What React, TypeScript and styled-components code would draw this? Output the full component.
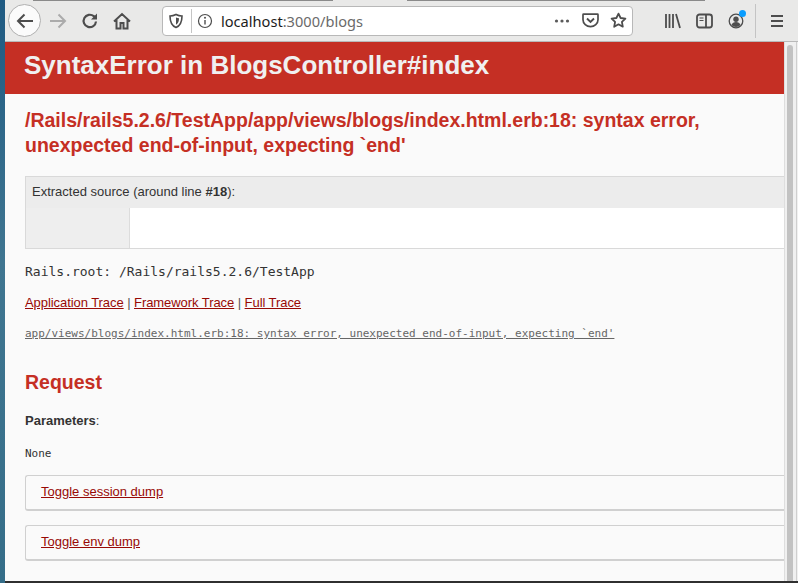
import React from "react";
import styled, { createGlobalStyle } from "styled-components";

const Global = createGlobalStyle`
  html, body { margin: 0; padding: 0; width: 798px; height: 583px; overflow: hidden; background: #2f2f2f; }
  #root { width: 798px; height: 583px; }
`;

const Screen = styled.div`
  display: flex; width: 798px; height: 583px; overflow: hidden;
  font-family: "Liberation Sans", Arial, sans-serif;
`;
const Desktop = styled.div`
  width: 5px; flex: none; background: linear-gradient(180deg, #1f5a82 0%, #3f7590 45%, #356d88 100%);
`;
const Window = styled.div`
  flex: 1; min-width: 0; display: flex; flex-direction: column; height: 581px; background: #fafafa;
`;
const Toolbar = styled.div`
  height: 42px; flex: none; box-sizing: border-box; display: flex; align-items: center;
  background-color: #e9e9e8;
  background-image: linear-gradient(to right, transparent 28px, #8a8a8a 28px, #8a8a8a 328px, transparent 328px, transparent 402px, #8a8a8a 402px, #8a8a8a 700px, transparent 700px);
  background-size: 100% 1px; background-repeat: no-repeat; background-position: top;
  border-bottom: 1px solid #b9b9b9;
`;
const BackButton = styled.div`
  width: 33px; height: 33px; margin-left: 3px; border-radius: 50%; border: 1px solid #b0b0b0;
  background: #fbfbfb; display: flex; align-items: center; justify-content: center; box-sizing: border-box; flex: none;
`;
const ToolIcon = styled.div<{ $w?: number; $ml?: number }>`
  width: ${(p) => p.$w ?? 20}px; height: 20px; margin-left: ${(p) => p.$ml ?? 0}px; flex: none;
  display: flex; align-items: center; justify-content: center; position: relative;
`;
const UrlBar = styled.div`
  width: 471px; height: 30px; margin-left: 30px; flex: none; box-sizing: border-box; padding-right: 5px;
  background: #fff; border: 1px solid #b8b8b8; border-radius: 4px; display: flex; align-items: center;
`;
const Divider = styled.div<{ $h: number; $ml: number }>`
  width: 1px; height: ${(p) => p.$h}px; background: #c4c4c4; margin-left: ${(p) => p.$ml}px; flex: none;
`;
const UrlText = styled.div`
  font-family: "Noto Sans", "Open Sans", sans-serif; font-size: 14.6px; color: #6a6a6a; margin-left: 8px; flex: 1; white-space: nowrap;
`;
const Host = styled.span`color: #1c1c1c;`;
const Dot = styled.span`
  position: absolute; right: -1px; top: -1px; width: 7px; height: 7px; border-radius: 50%; background: #0a9dff;
`;
const Viewport = styled.div`
  flex: 1; min-height: 0; display: flex;
`;
const Page = styled.div`
  flex: 1; min-width: 0; overflow: hidden; color: #333; font-size: 13px; line-height: 18px; background: #fafafa;
`;
const Header = styled.header`
  height: 52px; box-sizing: border-box; background: #c52f24; color: #f0f0f0; padding: 0 19px 6px; display: flex; align-items: center;
`;
const Title = styled.h1`
  margin: 0; font-size: 26px; line-height: 29px; font-weight: 700; white-space: nowrap;
`;
const Main = styled.main`
  padding: 14px 0 0 20px;
`;
const ErrorTitle = styled.h2`
  margin: 0; color: #c52f24; font-size: 19.5px; line-height: 25px; font-weight: 700; width: 720px;
`;
const Source = styled.div`
  margin-top: 18px; border: 1px solid #d9d9d9; border-right: none; background: #eee; height: 73px; box-sizing: border-box;
  display: flex; flex-direction: column;
`;
const SourceHead = styled.div`
  height: 31px; flex: none; padding: 6px 6px 0; box-sizing: border-box; background: #ececec; color: #333;
`;
const SourceBody = styled.div`
  flex: 1; display: flex;
`;
const Gutter = styled.div`
  width: 104px; flex: none; box-sizing: border-box; border-right: 1px solid #dcdcdc; background: #eee;
`;
const Code = styled.div`
  flex: 1; background: #fff;
`;
const RailsRoot = styled.div`
  font-family: "DejaVu Sans Mono", "Liberation Mono", monospace; font-size: 13px; line-height: 16px; margin-top: 15px; color: #333; white-space: pre;
`;
const TraceLinks = styled.div`
  margin-top: 14px; color: #555; font-size: 13px; line-height: 18px; letter-spacing: -0.065px;
`;
const Link = styled.a`
  color: #980905; text-decoration: underline;
`;
const FileLink = styled.div`
  font-family: "DejaVu Sans Mono", monospace; font-size: 11px; line-height: 14px; margin-top: 15px; color: #666; text-decoration: underline; white-space: nowrap;
`;
const SectionTitle = styled.h2`
  margin: 29px 0 0; color: #c52f24; font-size: 19.5px; line-height: 25px; font-weight: 700;
`;
const Params = styled.p`
  margin: 17px 0 0; line-height: 18px; color: #333;
`;
const NoneText = styled.pre`
  margin: 17px 0 0; font-family: "DejaVu Sans Mono", monospace; font-size: 11px; line-height: 14px; color: #333;
`;
const Dump = styled.div`
  margin-top: 14px; height: 36px; box-sizing: border-box; border: 1px solid #d0d0d0; border-bottom-width: 2px; border-right: none;
  border-radius: 3px 0 0 3px; padding: 7px 15px 0;
`;
const Scrollbar = styled.div`
  width: 14px; flex: none; background: #f0f0f0; border-left: 1px solid #dedede; box-sizing: border-box; padding: 3px 5px 0 2px; display: flex;
  box-shadow: inset -1px 0 0 #f0f0f0, inset -2px 0 0 #cfcfcf;
`;
const Thumb = styled.div`
  flex: 1; background: #c2c2c2; border-radius: 3px 3px 0 0;
`;

const s = { fill: "none", stroke: "#4d4d4d", strokeWidth: 2 } as const;

export default function App() {
  return (
    <Screen>
      <Global />
      <Desktop />
      <Window>
        <Toolbar>
          <BackButton>
            <svg width="18" height="18" viewBox="0 0 18 18"><path d="M17 9H2M8.500 2.500 2 9l6.500 6.500" {...s} /></svg>
          </BackButton>
          <ToolIcon $ml={7}>
            <svg width="18" height="18" viewBox="0 0 18 18"><path d="M1 9h14.500M9.500 2.500 16 9l-6.500 6.500" {...s} stroke="#ababab" /></svg>
          </ToolIcon>
          <ToolIcon $ml={12}>
            <svg width="18" height="18" viewBox="0 0 18 18"><path d="M15 9.500A6.200 6.200 0 1 1 12.800 4.200L15 6" {...s} strokeWidth={2.200} /><path d="M16 1.500v6h-6z" fill="#4d4d4d" /></svg>
          </ToolIcon>
          <ToolIcon $ml={12}>
            <svg width="18" height="18" viewBox="0 0 18 18"><path d="M1 9.500 9 2l8 7.500M3.500 8v8.500h4V11h3v5.500h4V8" {...s} /></svg>
          </ToolIcon>
          <UrlBar>
            <ToolIcon $w={20} $ml={3}>
              <svg width="16" height="16" viewBox="0 0 16 16"><path d="M2 3c2 0 4-.5 6-1.500C10 2.500 12 3 14 3c0 5-1 9.500-6 11.500C3 12.500 2 8 2 3Z" {...s} strokeWidth={1.600} /><path d="M8 4.500c1 .5 2 .8 3 .8 0 3-.6 5-3 6.500Z" fill="#4d4d4d" /></svg>
            </ToolIcon>
            <Divider $h={24} $ml={5} />
            <ToolIcon $w={16} $ml={5}>
              <svg width="16" height="16" viewBox="0 0 16 16"><circle cx="8" cy="8" r="6.500" fill="none" stroke="#4d4d4d" strokeWidth="1.200" /><path d="M8 7v4.500" stroke="#4d4d4d" strokeWidth="1.400" /><circle cx="8" cy="4.800" r="1" fill="#4d4d4d" /></svg>
            </ToolIcon>
            <UrlText><Host>localhost</Host>:3000/blogs</UrlText>
            <ToolIcon $w={18}>
              <svg width="16" height="6" viewBox="0 0 16 6" fill="#5a5a5a"><circle cx="2.500" cy="3" r="1.600" /><circle cx="8" cy="3" r="1.600" /><circle cx="13.500" cy="3" r="1.600" /></svg>
            </ToolIcon>
            <ToolIcon $w={18} $ml={10}>
              <svg width="17" height="17" viewBox="0 0 17 17"><path d="M1.500 2.200h14c.4 0 .5.200.5.500v5c0 4-3.500 7-7.500 7S1 11.700 1 7.700v-5c0-.3.200-.5.500-.5Z" {...s} strokeWidth={1.700} /><path d="m5 6.500 3.500 3.500L12 6.500" {...s} strokeWidth={1.900} /></svg>
            </ToolIcon>
            <ToolIcon $w={18} $ml={10}>
              <svg width="17" height="17" viewBox="0 0 17 17"><path d="m8.500 1.600 2.100 4.400 4.800.6-3.500 3.300.9 4.800-4.300-2.400-4.300 2.400.9-4.800L1.600 6.600l4.800-.6Z" {...s} strokeWidth={1.800} strokeLinejoin="round" /></svg>
            </ToolIcon>
          </UrlBar>
          <ToolIcon $w={18} $ml={30}>
            <svg width="17" height="16" viewBox="0 0 17 16"><path d="M2 1v14M5.500 1v14M9 1v14M12 1l4 14" {...s} strokeWidth={1.800} /></svg>
          </ToolIcon>
          <ToolIcon $w={18} $ml={14}>
            <svg width="17" height="16" viewBox="0 0 17 16"><rect x="1" y="1.500" width="15" height="13" rx="2.500" {...s} strokeWidth={1.800} /><path d="M10 1.500v13" {...s} strokeWidth={1.800} /><path d="M3.500 5h4M3.500 7.500h4" stroke="#4d4d4d" strokeWidth="1.200" /></svg>
          </ToolIcon>
          <ToolIcon $w={18} $ml={14}>
            <svg width="16" height="16" viewBox="0 0 16 16"><circle cx="8" cy="8" r="6.800" {...s} strokeWidth={1.300} /><circle cx="8" cy="6.300" r="2.700" fill="#4d4d4d" /><path d="M3.500 12c.5-2 2.500-3 4.500-3s4 1 4.500 3a6 6 0 0 1-9 0Z" fill="#4d4d4d" /></svg>
            <Dot />
          </ToolIcon>
          <Divider $h={34} $ml={10} />
          <ToolIcon $w={16} $ml={13}>
            <svg width="14" height="14" viewBox="0 0 14 14"><path d="M1 2h12M1 7h12M1 12h12" {...s} strokeWidth={1.800} /></svg>
          </ToolIcon>
        </Toolbar>
        <Viewport>
          <Page>
            <Header><Title>SyntaxError in BlogsController#index</Title></Header>
            <Main>
              <ErrorTitle>/Rails/rails5.2.6/TestApp/app/views/blogs/index.html.erb:18: syntax error, unexpected end-of-input, expecting `end'</ErrorTitle>
              <Source>
                <SourceHead>Extracted source (around line <b>#18</b>):</SourceHead>
                <SourceBody><Gutter /><Code /></SourceBody>
              </Source>
              <RailsRoot>Rails.root: /Rails/rails5.2.6/TestApp</RailsRoot>
              <TraceLinks><Link>Application Trace</Link> | <Link>Framework Trace</Link> | <Link>Full Trace</Link></TraceLinks>
              <FileLink>app/views/blogs/index.html.erb:18: syntax error, unexpected end-of-input, expecting `end'</FileLink>
              <SectionTitle>Request</SectionTitle>
              <Params><b>Parameters</b>:</Params>
              <NoneText>None</NoneText>
              <Dump><Link>Toggle session dump</Link></Dump>
              <Dump><Link>Toggle env dump</Link></Dump>
            </Main>
          </Page>
          <Scrollbar><Thumb /></Scrollbar>
        </Viewport>
      </Window>
    </Screen>
  );
}
